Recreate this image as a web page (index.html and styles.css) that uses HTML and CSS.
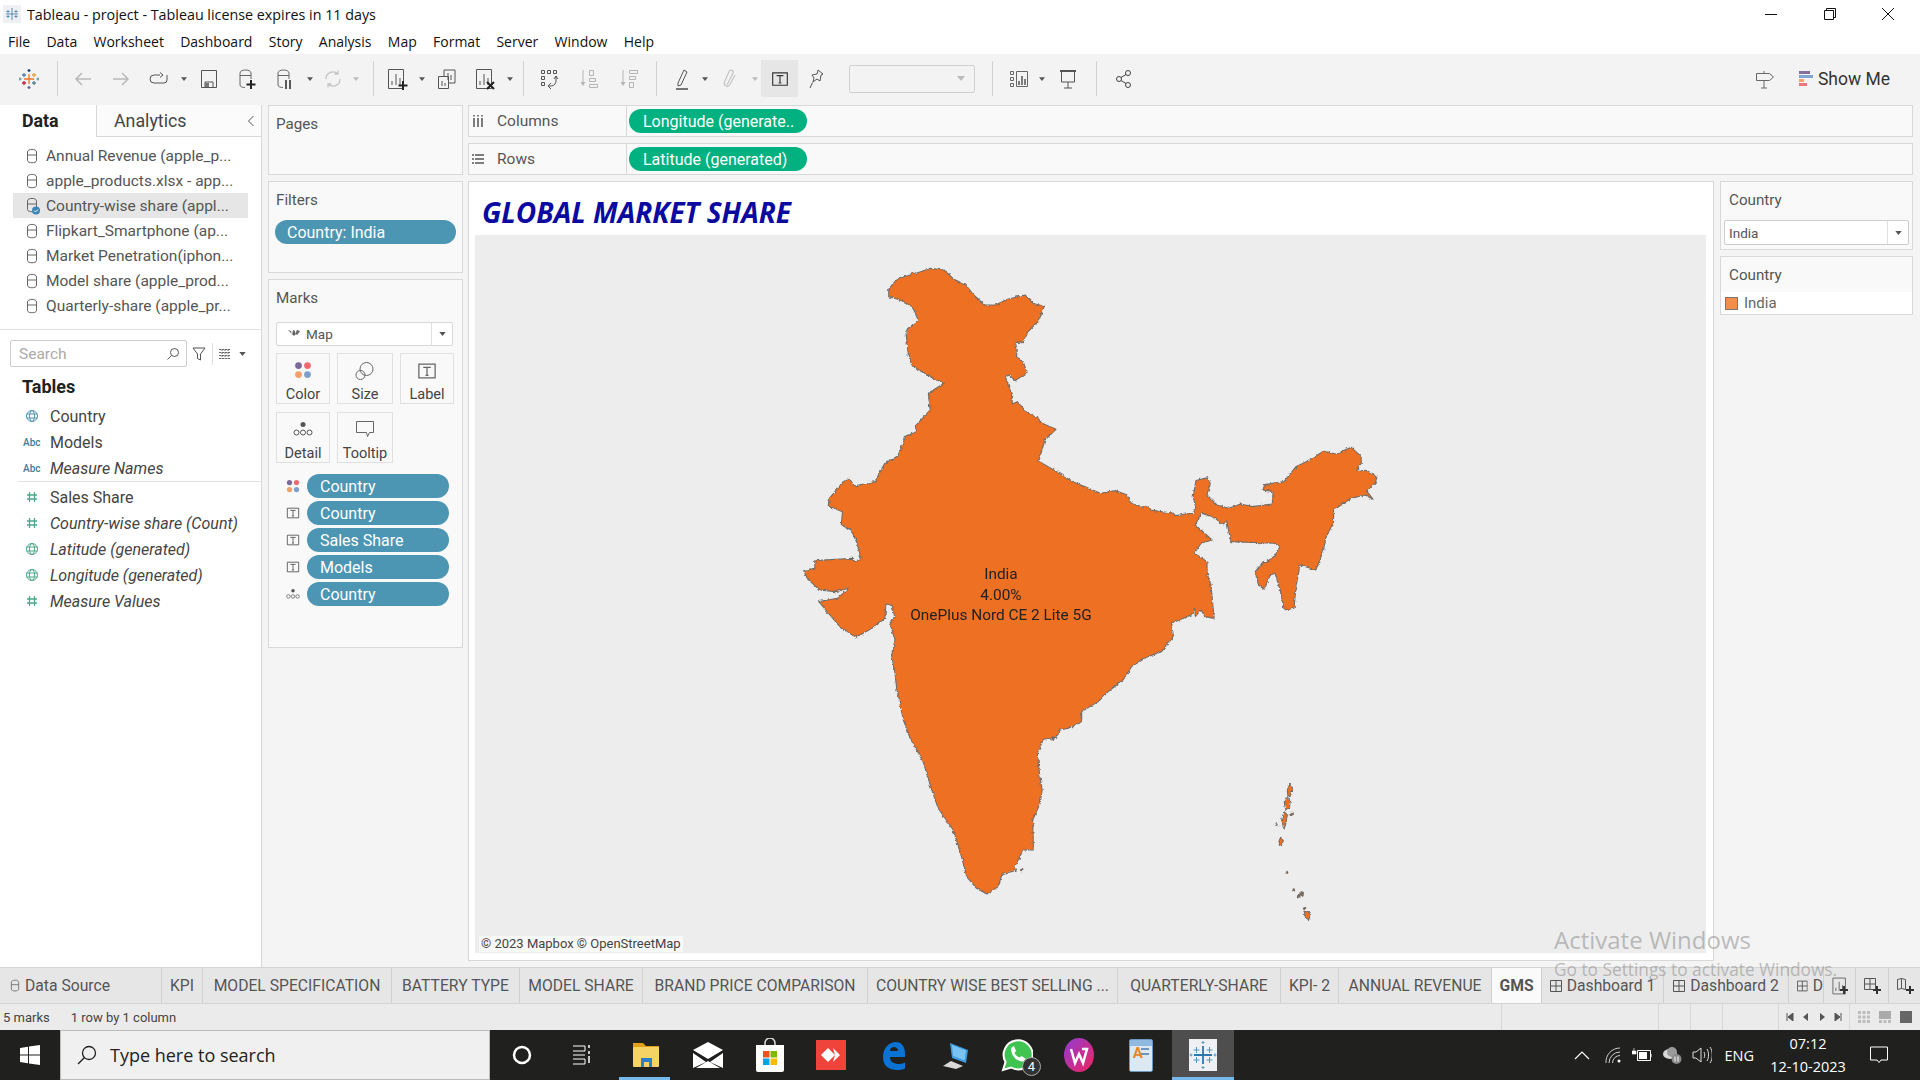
FILE: index.html
```html
<!DOCTYPE html>
<html lang="en">
<head>
    <meta charset="UTF-8">
    <title>Tableau - project</title>
    <link rel="stylesheet" href="styles.css">
</head>
<body>
    <!-- shared icons -->
    <svg class="defs" width="0" height="0">
        <symbol id="db" viewBox="0 0 12 16"><path d="M1.5 4v8.5c0 3 9 3 9 0V4c0-3.500-9-3.500-9 0zM1.500 7h9" fill="none" stroke="currentColor"/></symbol>
        <symbol id="db-on" viewBox="0 0 14 18"><path d="M1.500 4v8.500c0 3 9 3 9 0V4c0-3.500-9-3.500-9 0zM1.500 7h9" fill="none" stroke="currentColor"/><circle cx="10" cy="13.500" r="4" fill="#3a86b5"/><path d="M8 13.500l1.500 1.500 2.500-2.500" fill="none" stroke="#fff"/></symbol>
        <symbol id="globe" viewBox="0 0 14 14"><g fill="none" stroke="currentColor"><circle cx="7" cy="7" r="5.500"/><ellipse cx="7" cy="7" rx="2.500" ry="5.500"/><path d="M1.500 5h11M1.500 9h11"/></g></symbol>
        <symbol id="hash" viewBox="0 0 14 14"><path d="M4.500 2v10M9.500 2v10M2 5h10M2 9h10" fill="none" stroke="currentColor" stroke-width="1.300"/></symbol>
        <symbol id="tbox" viewBox="0 0 16 16"><path d="M1.500 2.500h13v11h-13zM5 5h6M8 5v6.500M6.800 11.500h2.400" fill="none" stroke="currentColor"/></symbol>
        <symbol id="dots4" viewBox="0 0 16 16"><circle cx="4" cy="4" r="3" fill="#7b6a97"/><circle cx="12" cy="4" r="3" fill="#ee6a72"/><circle cx="4" cy="12" r="3" fill="#f2a06a"/><circle cx="12" cy="12" r="3" fill="#7f9fcb"/></symbol>
        <symbol id="detail" viewBox="0 0 20 16"><circle cx="10" cy="3.500" r="2.500" fill="#555"/><g fill="none" stroke="#555"><circle cx="3.500" cy="11.500" r="2.500"/><circle cx="10" cy="11.500" r="2.500"/><circle cx="16.500" cy="11.500" r="2.500"/></g></symbol>
        <symbol id="table" viewBox="0 0 12 12"><path d="M.5.5h11v11H.5zM6 .5v11M.5 6h11" fill="none" stroke="currentColor"/></symbol>
        <symbol id="bars" viewBox="0 0 24 24"><path d="M3.500 2.500h15v19h-15zM7 18v-4M11 18V7M15 18v-7" fill="none" stroke="#555"/></symbol>
        <symbol id="caret" viewBox="0 0 8 5"><path d="M0 0h8L4 5z" fill="currentColor"/></symbol>
    </svg>

    <div class="titlebar">
        <svg class="app-icon" width="18" height="18" viewBox="0 0 18 18"><rect width="18" height="18" fill="#eef0f3"/><path d="M9 3v12M3 9h12M5 5v3M3.500 6.500h3M13 5v3M11.500 6.500h3M5 10v3M3.500 11.500h3M13 10v3M11.500 11.500h3" stroke="#5b8fb3" fill="none"/></svg>
        <span class="app-title">Tableau - project - Tableau license expires in 11 days</span>
        <div class="win-btns">
            <svg width="14" height="14" viewBox="0 0 14 14"><path d="M1 7.500h12" stroke="#111" fill="none"/></svg>
            <svg width="14" height="14" viewBox="0 0 14 14"><path d="M1.500 3.500h9v9h-9zM3.500 3.500v-2h9v9h-2" stroke="#111" fill="none"/></svg>
            <svg width="14" height="14" viewBox="0 0 14 14"><path d="M1 1l12 12M13 1L1 13" stroke="#111" fill="none"/></svg>
        </div>
    </div>

    <div class="menubar">
        <span>File</span><span>Data</span><span>Worksheet</span><span>Dashboard</span><span>Story</span><span>Analysis</span><span>Map</span><span>Format</span><span>Server</span><span>Window</span><span>Help</span>
    </div>

    <div class="toolbar">
        <div class="tg tg-logo">
            <div class="tool">
                <svg width="20" height="22" viewBox="0 0 20 22" fill="none" stroke-width="1.300"><path d="M10 6v10M5 11h10" stroke="#e8762b"/><path d="M5 5v4M3 7h4" stroke="#5b7fa8"/><path d="M15 5v4M13 7h4" stroke="#e8a03a"/><path d="M5 13v4M3 15h4" stroke="#c72037"/><path d="M15 13v4M13 15h4" stroke="#59879b"/><path d="M10 1v3M8.500 2.500h3" stroke="#1f447a"/><path d="M10 18v3M8.500 19.500h3" stroke="#5b6591"/><path d="M1 9.500v3M-.5 11h3M19 9.500v3M17.500 11h3" stroke="#7099a6"/></svg>
            </div>
        </div>
        <div class="sep"></div>
        <div class="tg tg-file">
            <div class="tool"><svg width="22" height="22" viewBox="0 0 22 22"><path d="M19 11H4M10 5l-6 6 6 6" fill="none" stroke="#b9b9b9" stroke-width="1.500"/></svg></div>
            <div class="tool"><svg width="22" height="22" viewBox="0 0 22 22"><path d="M3 11h15M12 5l6 6-6 6" fill="none" stroke="#b9b9b9" stroke-width="1.500"/></svg></div>
            <div class="tool"><svg width="22" height="22" viewBox="0 0 22 22"><path d="M12 7H6a3.500 3.500 0 0 0 0 8h10a3 3 0 0 0 3-3V7M12 4.500L15 7l-3 2.500" fill="none" stroke="#555"/></svg></div>
            <svg class="caret" width="6" height="4"><use href="#caret"/></svg>
            <div class="tool"><svg width="20" height="22" viewBox="0 0 20 22"><path d="M2.500 2.500h15v17h-15zM6 19.500V14h8v5.500M6 19.500" fill="none" stroke="#555"/><rect x="6" y="15" width="4" height="4" fill="#777"/></svg></div>
            <div class="tool"><svg width="22" height="24" viewBox="0 0 22 24"><path d="M4 6v12c0 2 3 2.500 5 2.500M15 12V6c0-4-11-4-11 0M4 8.500h11" fill="none" stroke="#666"/><path d="M15 13v9M10.500 17.500h9" stroke="#222" stroke-width="2"/></svg></div>
            <div class="tool"><svg width="22" height="24" viewBox="0 0 22 24"><path d="M4 6v12c0 2 3 2.500 5 2.500M15 12V6c0-4-11-4-11 0M4 8.500h11" fill="none" stroke="#666"/><path d="M12 13v9M16 13v9" stroke="#333" stroke-width="1.600"/></svg></div>
            <svg class="caret" width="6" height="4"><use href="#caret"/></svg>
            <div class="tool tool-sm"><svg width="20" height="22" viewBox="0 0 20 22"><path d="M3 11a7 7 0 0 1 12-5M17 11a7 7 0 0 1-12 5M15 2.500V6h-3.500M5 19.500V16h3.500" fill="none" stroke="#c4c4c4" stroke-width="1.300"/></svg></div>
            <svg class="caret caret-off" width="6" height="4"><use href="#caret"/></svg>
        </div>
        <div class="sep"></div>
        <div class="tg tg-sheet">
            <div class="tool"><svg width="24" height="24"><use href="#bars"/><path d="M18 14v9M13.500 18.500h9" stroke="#222" stroke-width="2"/></svg></div>
            <svg class="caret" width="6" height="4"><use href="#caret"/></svg>
            <div class="tool"><svg width="22" height="24" viewBox="0 0 22 24"><path d="M8 9V3h11v13h-7M2.500 9.500h10v12h-10zM12 13V6M15 13V8M6 19v-5M9 19v-3" fill="none" stroke="#555"/></svg></div>
            <div class="tool"><svg width="24" height="24"><use href="#bars"/><path d="M14 15l7 7M21 15l-7 7" stroke="#222" stroke-width="2"/></svg></div>
            <svg class="caret" width="6" height="4"><use href="#caret"/></svg>
        </div>
        <div class="sep"></div>
        <div class="tg tg-sort">
            <div class="tool"><svg width="22" height="24" viewBox="0 0 22 24"><path d="M3.500 3.500h3v3h-3zM9.500 3.500h3v3h-3zM15.500 3.500h3v3h-3zM3.500 9.500h3v3h-3zM3.500 15.500h3v3h-3zM18 9v5a5 5 0 0 1-5 5h-2M13 16l-3 3 3 3M16 12l2-3 2 3" fill="none" stroke="#555"/></svg></div>
            <div class="tool"><svg width="20" height="22" viewBox="0 0 20 22"><path d="M3 2v13M9.500 2.500h4v5h-4zM9.500 10.500h6v3h-6zM9.500 16.500h8v3h-8z" fill="none" stroke="#b5b5b5"/><path d="M.5 14h5L3 18z" fill="#b5b5b5"/></svg></div>
            <div class="tool"><svg width="20" height="22" viewBox="0 0 20 22"><path d="M3 2v13M9.500 2.500h8v3h-8zM9.500 8.500h6v3h-6zM9.500 14.500h4v5h-4z" fill="none" stroke="#b5b5b5"/><path d="M.5 14h5L3 18z" fill="#b5b5b5"/></svg></div>
        </div>
        <div class="sep"></div>
        <div class="tg tg-format">
            <div class="tool tool-sm"><svg width="18" height="24" viewBox="0 0 18 24"><path d="M5 16l6-13 3 2-6 13-3 1z" fill="none" stroke="#555"/><path d="M3 22h12" stroke="#555" stroke-width="1.600"/></svg></div>
            <svg class="caret" width="6" height="4"><use href="#caret"/></svg>
            <div class="tool"><svg width="16" height="22" viewBox="0 0 16 22"><path d="M5 17L11 5c1-2.500-2.500-4-4-1.500L2.500 14c-1.500 3.500 3.500 6 5.500 2.500L13 7" fill="none" stroke="#c4c4c4" stroke-width="1.200"/></svg></div>
            <svg class="caret caret-off" width="6" height="4"><use href="#caret"/></svg>
            <div class="tool tool-on"><svg class="t-ic" width="18" height="18"><use href="#tbox"/></svg></div>
            <div class="tool tool-sm tool-pin"><svg width="18" height="22" viewBox="0 0 18 22"><path d="M10 2l5 4-2 1-1 6-3-2-4 3 1-4-2-3 5-1zM4.500 14.500L2 20" fill="none" stroke="#555"/></svg></div>
            <div class="combo"><svg class="caret caret-off" width="8" height="5"><use href="#caret"/></svg></div>
        </div>
        <div class="sep"></div>
        <div class="tg tg-view">
            <div class="tool tool-sm"><svg width="20" height="20" viewBox="0 0 20 20"><path d="M1.500 2.500h3v3h-3zM1.500 8.500h3v3h-3zM1.500 14.500h3v3h-3zM7.500 2.500h11v15h-11z" fill="none" stroke="#666"/><path d="M10 16v-4M13 16V7M16 16v-6" stroke="#555" stroke-width="1.500"/></svg></div>
            <svg class="caret" width="6" height="4"><use href="#caret"/></svg>
            <div class="tool"><svg width="20" height="22" viewBox="0 0 20 22"><path d="M2 3h16" stroke="#555" stroke-width="2"/><path d="M3.500 3v11h13V3M10 14v6M6 20h8" fill="none" stroke="#555"/></svg></div>
        </div>
        <div class="sep"></div>
        <div class="tg tg-share">
            <div class="tool tool-sm"><svg width="18" height="20" viewBox="0 0 18 20"><g fill="none" stroke="#444"><circle cx="13" cy="4" r="2.500"/><circle cx="4" cy="10" r="2.500"/><circle cx="13" cy="16" r="2.500"/><path d="M6 8.500l5-3M6 11.500l5 3"/></g></svg></div>
        </div>
        <div class="tool-right">
            <svg width="20" height="20" viewBox="0 0 20 20"><path d="M1.500 4.500h13l4 3.500-4 3.500h-13zM9 2v2.500M9 11.500V19M6 19h6" fill="none" stroke="#666"/></svg>
            <button class="show-me">
                <span class="sm-icon"><i class="b1"></i><i class="b2"></i><i class="b3"></i><i class="b4"></i></span>
                Show Me
            </button>
        </div>
    </div>

    <div class="workspace">
        <!-- Data pane -->
        <aside class="data-panel">
            <div class="panel-tabs">
                <div class="panel-tab active">Data</div>
                <div class="panel-tab">Analytics<svg class="collapse" width="8" height="12" viewBox="0 0 8 12"><path d="M6.500 1L1.500 6l5 5" fill="none" stroke="#555"/></svg></div>
            </div>
            <ul class="sources">
                <li><svg class="db" width="12" height="16"><use href="#db"/></svg>Annual Revenue (apple_p...</li>
                <li><svg class="db" width="12" height="16"><use href="#db"/></svg>apple_products.xlsx - app...</li>
                <li class="selected"><svg class="db db-sel" width="14" height="18"><use href="#db-on"/></svg>Country-wise share (appl...</li>
                <li><svg class="db" width="12" height="16"><use href="#db"/></svg>Flipkart_Smartphone (ap...</li>
                <li><svg class="db" width="12" height="16"><use href="#db"/></svg>Market Penetration(iphon...</li>
                <li><svg class="db" width="12" height="16"><use href="#db"/></svg>Model share (apple_prod...</li>
                <li><svg class="db" width="12" height="16"><use href="#db"/></svg>Quarterly-share (apple_pr...</li>
            </ul>
            <div class="search-row">
                <div class="search-box">
                    <span>Search</span>
                    <svg width="14" height="14" viewBox="0 0 14 14"><circle cx="8.500" cy="5.500" r="4" fill="none" stroke="#555"/><path d="M5.500 8.500L1.500 12.500" stroke="#555"/></svg>
                </div>
                <svg class="filter-ic" width="14" height="14" viewBox="0 0 14 14"><path d="M1 1h12L8.500 7v6l-3-1.500V7z" fill="none" stroke="#555"/></svg>
                <span class="row-sep"></span>
                <svg width="12" height="10" viewBox="0 0 12 10"><path d="M0 .5h12M0 3.500h12M0 6.500h12M0 9.500h12M3 0v10M6 0v10M9 0v10" stroke="#666" stroke-dasharray="2 1" fill="none"/></svg>
                <svg class="caret row-caret" width="7" height="4"><use href="#caret"/></svg>
            </div>
            <h3 class="tables-head">Tables</h3>
            <ul class="fields">
                <li><svg class="f-ic blue" width="14" height="14"><use href="#globe"/></svg>Country</li>
                <li><span class="abc">Abc</span>Models</li>
                <li class="calc"><span class="abc">Abc</span>Measure Names</li>
                <li class="divider"></li>
                <li><svg class="f-ic green" width="14" height="14"><use href="#hash"/></svg>Sales Share</li>
                <li class="calc"><svg class="f-ic green" width="14" height="14"><use href="#hash"/></svg>Country-wise share (Count)</li>
                <li class="calc"><svg class="f-ic green" width="14" height="14"><use href="#globe"/></svg>Latitude (generated)</li>
                <li class="calc"><svg class="f-ic green" width="14" height="14"><use href="#globe"/></svg>Longitude (generated)</li>
                <li class="calc"><svg class="f-ic green" width="14" height="14"><use href="#hash"/></svg>Measure Values</li>
            </ul>
        </aside>

        <!-- Pages / Filters / Marks -->
        <section class="cards">
            <div class="card card-pages"><div class="card-title">Pages</div></div>
            <div class="card card-filters">
                <div class="card-title">Filters</div>
                <div class="pill pill-filter">Country: India</div>
            </div>
            <div class="card card-marks">
                <div class="card-title">Marks</div>
                <div class="mark-type">
                    <span class="mark-name">
                        <svg width="14" height="12" viewBox="0 0 14 12"><path d="M1 2l3 1 1 4 1-5 2 1v3l2-4 3 1-2 3-1 1-1-1-2 2 -2-2z" fill="#666"/></svg>
                        Map
                    </span>
                    <span class="mark-drop"><svg class="caret" width="7" height="4"><use href="#caret"/></svg></span>
                </div>
                <div class="mark-btns">
                    <div class="mark-btn"><svg width="18" height="18"><use href="#dots4"/></svg>Color</div>
                    <div class="mark-btn"><svg width="20" height="20" viewBox="0 0 20 20"><g fill="none" stroke="#666"><circle cx="11.500" cy="8" r="6.500"/><circle cx="5.500" cy="14" r="4.500"/></g></svg>Size</div>
                    <div class="mark-btn"><svg class="lbl-ic" width="20" height="20"><use href="#tbox"/></svg>Label</div>
                    <div class="mark-btn"><svg width="20" height="18"><use href="#detail"/></svg>Detail</div>
                    <div class="mark-btn"><svg width="20" height="18" viewBox="0 0 20 18"><path d="M1.500 1.500h17v11h-4l-2 4-1-4h-10z" fill="none" stroke="#666"/></svg>Tooltip</div>
                </div>
                <div class="encodings">
                    <div class="enc"><svg width="14" height="14"><use href="#dots4"/></svg><div class="pill">Country</div></div>
                    <div class="enc"><svg class="t-small" width="14" height="14"><use href="#tbox"/></svg><div class="pill">Country</div></div>
                    <div class="enc"><svg class="t-small" width="14" height="14"><use href="#tbox"/></svg><div class="pill">Sales Share</div></div>
                    <div class="enc"><svg class="t-small" width="14" height="14"><use href="#tbox"/></svg><div class="pill">Models</div></div>
                    <div class="enc"><svg width="14" height="12"><use href="#detail"/></svg><div class="pill">Country</div></div>
                </div>
            </div>
        </section>

        <main class="main">
            <div class="shelf">
                <div class="shelf-label"><svg width="12" height="12" viewBox="0 0 12 12"><path d="M2 3v9M6 3v9M10 3v9M2 0v1.500M6 0v1.500M10 0v1.500" stroke="#555" stroke-width="1.500"/></svg>Columns</div>
                <div class="pill pill-green">Longitude (generate..</div>
            </div>
            <div class="shelf">
                <div class="shelf-label"><svg width="12" height="12" viewBox="0 0 12 12"><path d="M0 2h2M3 2h9M0 6h2M3 6h9M0 10h2M3 10h9" stroke="#555" stroke-width="1.500"/></svg>Rows</div>
                <div class="pill pill-green">Latitude (generated)</div>
            </div>
            <div class="view-row">
                <div class="viz">
                    <h1 class="viz-title">GLOBAL MARKET SHARE</h1>
                    <div class="map">
                        <svg class="map-svg" width="1232" height="718" viewBox="0 0 1232 718">
                            <defs>
                                <filter id="rough" x="-2%" y="-2%" width="104%" height="104%">
                                    <feTurbulence type="fractalNoise" baseFrequency=".3" numOctaves="2" seed="3" result="n"/>
                                    <feDisplacementMap in="SourceGraphic" in2="n" scale="3.500" xChannelSelector="R" yChannelSelector="G"/>
                                </filter>
                            </defs>
                            <g filter="url(#rough)">
                                <path class="land" transform="translate(305 15) scale(.3954 .3333)" d="M275 118L285 102 300 85 330 75 335 65 345 70 380 55 415 60 440 88 470 105 490 135 518 165 545 165 575 148 620 135 640 160 668 170 655 210 628 245 615 275 595 278 600 300 598 320 615 335 625 368 595 392 580 375 570 380 585 430 588 462 600 455 625 488 655 505 660 518 698 538 670 570 660 610 652 632 700 665 740 695 775 712 810 730 850 722 878 735 885 755 910 772 930 768 935 780 995 790 1000 797 1045 790 1052 775 1045 740 1052 692 1082 683 1088 700 1080 735 1105 765 1135 775 1165 762 1195 770 1245 762 1247 725 1222 720 1225 704 1275 695 1305 650 1340 630 1375 603 1405 612 1445 592 1470 620 1470 640 1458 660 1485 662 1510 680 1505 700 1485 725 1500 748 1480 735 1445 745 1400 780 1400 815 1380 865 1375 900 1355 960 1315 945 1305 1010 1300 1075 1275 1080 1265 1020 1252 970 1240 975 1225 1018 1210 1005 1202 965 1215 945 1245 925 1265 890 1250 880 1140 875 1130 815 1120 822 1095 800 1065 790 1050 825 1093 870 1065 880 1048 910 1080 935 1080 970 1090 1005 1098 1105 1075 1100 1065 1080 1050 1100 1050 1075 1040 1095 990 1120 995 1160 965 1205 927 1222 889 1250 868 1290 830 1325 805 1355 763 1385 763 1415 729 1435 708 1440 700 1462 666 1468 651 1510 656 1570 663 1620 658 1660 639 1710 641 1800 615 1800 594 1850 598 1860 561 1875 552 1910 523 1932 497 1915 472 1880 459 1820 438 1740 400 1675 381 1610 362 1535 329 1465 312 1410 295 1315 291 1270 282 1215 291 1170 278 1120 290 1100 283 1065 268 1062 265 1105 240 1130 193 1162 155 1135 98 1055 145 1045 175 1015 140 1025 100 1020 68 985 60 962 88 955 88 932 185 925 190 935 205 925 195 880 180 840 155 825 158 785 122 768 125 745 160 695 175 685 188 708 240 695 265 640 298 618 318 558 345 545 345 525 380 480 375 430 415 400 380 380 335 348 325 320 318 240 350 212 335 170 305 150 275 140Z"/>
                                <g class="land" transform="translate(385 385) scale(.3333)">
                                    <path d="M1290 492L1298 505 1292 525 1284 528 1282 510ZM1280 530L1292 540 1288 565 1278 572 1273 545ZM1272 575L1282 585 1278 610 1272 628 1265 600ZM1262 652L1270 662 1265 677 1255 670ZM1332 875L1345 875 1352 885 1345 902 1336 890Z"/>
                                </g>
                                <g class="islet" transform="translate(385 385) scale(.3333)">
                                    <circle cx="1295" cy="582" r="7"/><circle cx="1249" cy="614" r="4"/><circle cx="1280" cy="757" r="5"/><circle cx="1301" cy="810" r="5"/><circle cx="1316" cy="830" r="6"/><circle cx="1325" cy="821" r="7"/><circle cx="1334" cy="866" r="5"/><circle cx="484" cy="750" r="4"/><circle cx="580" cy="357" r="5"/>
                                </g>
                            </g>
                        </svg>
                        <div class="map-label">India<br>4.00%<br>OnePlus Nord CE 2 Lite 5G</div>
                        <div class="attribution">© 2023 Mapbox © OpenStreetMap</div>
                    </div>
                </div>
                <div class="legends">
                    <div class="legend">
                        <div class="legend-title">Country</div>
                        <div class="legend-body">
                            <div class="legend-select">India<span class="mark-drop"><svg class="caret" width="7" height="4"><use href="#caret"/></svg></span></div>
                        </div>
                    </div>
                    <div class="legend">
                        <div class="legend-title">Country</div>
                        <div class="legend-item"><span class="swatch"></span>India</div>
                    </div>
                </div>
            </div>
        </main>
    </div>

    <div class="tabs">
        <div class="tab tab-ds"><svg class="db" width="10" height="13"><use href="#db"/></svg>Data Source</div>
        <div class="tab">KPI</div>
        <div class="tab">MODEL SPECIFICATION</div>
        <div class="tab">BATTERY TYPE</div>
        <div class="tab">MODEL SHARE</div>
        <div class="tab">BRAND PRICE COMPARISON</div>
        <div class="tab">COUNTRY WISE BEST SELLING ...</div>
        <div class="tab">QUARTERLY-SHARE</div>
        <div class="tab">KPI- 2</div>
        <div class="tab">ANNUAL REVENUE</div>
        <div class="tab tab-on">GMS</div>
        <div class="tab tab-dash"><svg width="12" height="12"><use href="#table"/></svg>Dashboard 1</div>
        <div class="tab tab-dash"><svg width="12" height="12"><use href="#table"/></svg>Dashboard 2</div>
        <div class="tab tab-dash tab-cut"><svg width="12" height="12"><use href="#table"/></svg>D</div>
        <div class="tab tab-ic"><svg width="20" height="20"><use href="#bars"/><path d="M14 10v8M10 14h8" stroke="#333" stroke-width="2"/></svg></div>
        <div class="tab tab-ic"><svg width="20" height="20" viewBox="0 0 20 20"><path d="M2.500 2.500h11v11h-11zM8 2.500v11M2.500 8h11" fill="none" stroke="#555"/><path d="M15 10v8M11 14h8" stroke="#333" stroke-width="2"/></svg></div>
        <div class="tab tab-ic"><svg width="20" height="20" viewBox="0 0 20 20"><path d="M2.500 3.500l4-1 4 1v10l-4-1-4 1zM6.500 2.500v10" fill="none" stroke="#555"/><path d="M15 10v8M11 14h8" stroke="#333" stroke-width="2"/></svg></div>
    </div>

    <div class="status">
        <div class="st-cell st-info"><span>5 marks</span><span>1 row by 1 column</span></div>
        <div class="st-cell"></div><div class="st-cell"></div><div class="st-cell"></div><div class="st-cell"></div>
        <div class="st-cell st-nav">
            <svg width="8" height="8" viewBox="0 0 8 8"><path d="M1 0v8M7 0v8L2 4z" stroke="#555" fill="#555"/></svg>
            <svg width="8" height="8" viewBox="0 0 8 8"><path d="M6 0v8L1 4z" fill="#555"/></svg>
            <svg width="8" height="8" viewBox="0 0 8 8"><path d="M2 0v8l5-4z" fill="#555"/></svg>
            <svg width="8" height="8" viewBox="0 0 8 8"><path d="M7 0v8M1 0v8l5-4z" stroke="#555" fill="#555"/></svg>
        </div>
        <div class="st-cell st-view">
            <svg width="12" height="12" viewBox="0 0 12 12"><path d="M0 1.500h12M0 6h12M0 10.500h12" stroke="#bbb" stroke-width="3" stroke-dasharray="3 1.500"/></svg>
            <svg width="12" height="12" viewBox="0 0 12 12"><rect width="12" height="8" fill="#aaa"/><path d="M0 10.500h12" stroke="#bbb" stroke-width="3" stroke-dasharray="3 1.500"/></svg>
            <svg width="12" height="12"><rect width="12" height="12" fill="#666"/></svg>
        </div>
    </div>

    <div class="watermark">
        <div class="wm-big">Activate Windows</div>
        <div class="wm-small">Go to Settings to activate Windows.</div>
    </div>

    <footer class="taskbar">
        <div class="start">
            <svg width="20" height="20" viewBox="0 0 20 20"><path d="M0 3l8-1.200V9.500H0zM9 1.600L20 0v9.500H9zM0 10.500h8v7.700L0 17zM9 10.500h11V20L9 18.400z" fill="#fff"/></svg>
        </div>
        <div class="task-search">
            <svg width="22" height="22" viewBox="0 0 22 22"><circle cx="13" cy="9" r="6.500" fill="none" stroke="#222" stroke-width="1.300"/><path d="M8.500 13.500L2 20" stroke="#222" stroke-width="1.500"/></svg>
            <span>Type here to search</span>
        </div>
        <div class="task-icons">
            <div class="task-ic"><svg width="22" height="22" viewBox="0 0 22 22"><circle cx="11" cy="11" r="8" fill="none" stroke="#fff" stroke-width="2.500"/></svg></div>
            <div class="task-ic task-view"><svg width="22" height="22" viewBox="0 0 22 22"><path d="M3 2h12v5H3M3 20h12v-5H3M3 11h12" fill="none" stroke="#fff"/><path d="M19 7v3M19 12v7M19 1v3" stroke="#fff" stroke-width="1.500"/></svg></div>
            <div class="task-ic task-open"><svg width="30" height="28" viewBox="0 0 30 28"><path d="M2 2h10l3 3h13v3H2z" fill="#e0a01c"/><rect x="2" y="6" width="26" height="20" rx="1" fill="#f6d365"/><path d="M10 26v-9h11v9h-3v-5h-5v5z" fill="#2a7fd0"/></svg></div>
            <div class="task-ic"><svg width="32" height="26" viewBox="0 0 32 26"><path d="M1 8L16 0l15 8v18H1z" fill="#fff"/><path d="M1 8l15 9 15-9v3L18 20l13 6H28L16 19 4 26H1l13-6L1 11z" fill="#1f1f1f"/></svg></div>
            <div class="task-ic"><svg width="30" height="34" viewBox="0 0 30 34"><path d="M10 8V5a5 5 0 0 1 10 0v3" fill="none" stroke="#ddd" stroke-width="1.500"/><path d="M1 7h28v25a2 2 0 0 1-2 2H3a2 2 0 0 1-2-2z" fill="#fff"/><rect x="8" y="13" width="6.500" height="6.500" fill="#f25022"/><rect x="15.500" y="13" width="6.500" height="6.500" fill="#7fba00"/><rect x="8" y="20.500" width="6.500" height="6.500" fill="#00a4ef"/><rect x="15.500" y="20.500" width="6.500" height="6.500" fill="#ffb900"/></svg></div>
            <div class="task-ic"><svg width="30" height="30" viewBox="0 0 30 30"><rect width="30" height="30" fill="#ef443b"/><path d="M5 15l7-7 7 7-7 7z" fill="#fff"/><path d="M17 8l7 7-7 7 2-7z" fill="#fff"/></svg></div>
            <div class="task-ic"><svg width="28" height="32" viewBox="0 0 28 32"><path d="M4 18C4 8 11 3 17 3c6 0 9 5 9 12v3H11c0 5 4 7 9 7 2 0 4-.5 6-1.500v6c-2 1-5 1.500-8 1.500C9 31 4 26 4 18zm7-6h8c0-3-2-4-4-4s-4 1-4 4z" fill="#0a73d3"/></svg></div>
            <div class="task-ic"><svg width="28" height="30" viewBox="0 0 28 30"><path d="M9 3l18 7-2 13-14-5z" fill="#3d9ae0"/><path d="M11 5l14 5.500-1.500 10L12 16z" fill="#79c3f2"/><path d="M2 26l8-5 12 5-7 3z" fill="#d9d9d9"/></svg></div>
            <div class="task-ic task-wa">
                <svg width="32" height="34" viewBox="0 0 32 34"><path d="M2 32l2.500-8A14.500 14.500 0 1 1 10 29.500z" fill="#3fc351" stroke="#fff" stroke-width="2"/><path d="M10 10l3-2 2 5-1.500 2c1 2 2.500 3.500 5 4.500l2-1.500 4 2.500-2 3c-6 1-13-6-12.500-13.500z" fill="#fff"/></svg>
                <span class="wa-badge">4</span>
            </div>
            <div class="task-ic"><svg width="30" height="34" viewBox="0 0 30 34"><defs><linearGradient id="wps" x1="0" y1="0" x2="1" y2="1"><stop offset="0" stop-color="#8f3cd6"/><stop offset="1" stop-color="#f0245e"/></linearGradient></defs><ellipse cx="15" cy="17" rx="15" ry="17" fill="url(#wps)"/><path d="M7 11l4 14 4-9 4 9 4-14h-5" fill="none" stroke="#fff" stroke-width="2.500"/></svg></div>
            <div class="task-ic"><div class="fontbook"><span>A</span><i></i></div></div>
            <div class="task-ic task-active"><svg width="28" height="32" viewBox="0 0 28 32"><rect width="28" height="32" fill="#eef0f3"/><path d="M14 7v18M5 16h18" stroke="#2f77a8" stroke-width="1.800" fill="none"/><path d="M7.500 8v6M4.500 11h6M20.500 8v6M17.500 11h6M7.500 18v6M4.500 21h6M20.500 18v6M17.500 21h6M14 2v3M12.500 3.500h3M14 27v3M12.500 28.500h3M2 14.500v3M.5 16h3M26 14.500v3M24.500 16h3" stroke="#5b96bd" fill="none"/></svg></div>
        </div>
        <div class="tray">
            <svg width="16" height="10" viewBox="0 0 16 10"><path d="M1 9l7-7 7 7" fill="none" stroke="#fff" stroke-width="1.200"/></svg>
            <svg class="tray-wifi" width="16" height="18" viewBox="0 0 16 18"><g fill="none" stroke="#ccc"><path d="M1 17A14 14 0 0 1 15 2M4 17A11 11 0 0 1 15 6M7.500 17a7.500 7.500 0 0 1 7.500-7.500"/></g><circle cx="14" cy="15" r="1.500" fill="#fff"/></svg>
            <svg width="20" height="14" viewBox="0 0 20 14"><path d="M5.500 2.500h13v10h-13z" fill="none" stroke="#fff"/><rect x="7" y="4" width="8" height="7" fill="#fff"/><path d="M19 6v3" stroke="#fff"/><path d="M0 3h4v3H0zM2 0v3" fill="#fff" stroke="#fff" stroke-width=".6"/></svg>
            <svg width="20" height="20" viewBox="0 0 20 20"><ellipse cx="8" cy="9" rx="7" ry="5" fill="#d8d8d8"/><circle cx="10" cy="7" r="5" fill="#9a9a9a"/><circle cx="14.500" cy="14" r="5" fill="#8a8a8a"/><path d="M13 11.500v5M16 11.500v5" stroke="#fff"/></svg>
            <svg width="20" height="18" viewBox="0 0 20 18"><path d="M1 6h3l5-4v14l-5-4H1zM12 6c1 2 1 4 0 6M15 3c2 3 2 9 0 12M18 1c3 4 3 12 0 16" fill="none" stroke="#ddd"/></svg>
            <span class="lang">ENG</span>
            <div class="clock"><span>07:12</span><span>12-10-2023</span></div>
            <svg class="notif" width="18" height="18" viewBox="0 0 18 18"><path d="M.5 1h17v13H11l-2 2.500L7 14H.5z" fill="none" stroke="#fff"/></svg>
        </div>
    </footer>
</body>
</html>
```

FILE: styles.css
```css
* {
    box-sizing: border-box;
}
html, body {
    margin: 0;
    padding: 0;
}
body {
    width: 1920px;
    height: 1080px;
    overflow: hidden;
    position: relative;
    display: flex;
    flex-direction: column;
    font-family: "Roboto", "Liberation Sans", sans-serif;
    font-size: 14px;
    color: #333;
    background: #f4f4f4;
}
ul {
    list-style: none;
    margin: 0;
    padding: 0;
}
.defs {
    position: absolute;
}

/* window title + menu */
.titlebar {
    height: 27px;
    background: #fff;
    display: flex;
    align-items: center;
    padding: 1px 0 0 3px;
    font-family: "Open Sans", sans-serif;
    font-size: 14.300px;
    color: #111;
}
.app-title {
    margin-left: 6px;
}
.win-btns {
    margin-left: auto;
    display: flex;
    gap: 44.500px;
    padding-right: 25px;
}
.menubar {
    height: 27px;
    background: #fff;
    display: flex;
    align-items: center;
    gap: 16.300px;
    padding: 2px 0 0 8px;
    font-family: "Open Sans", sans-serif;
    font-size: 14px;
    color: #111;
}

/* toolbar */
.toolbar {
    height: 51px;
    background: #f3f3f3;
    display: flex;
    align-items: center;
    padding: 0 0 2px 10px;
}
.tg {
    display: flex;
    align-items: center;
    height: 100%;
}
.tg-logo { width: 47px; }
.tg-file { width: 315px; padding-left: 6px; }
.tg-sheet { width: 149px; padding-left: 4px; }
.tg-sort { width: 132px; padding-left: 6px; }
.tg-sort .tool:not(:first-child) { width: 40px; padding-left: 3px; }
.tg-format { width: 335px; padding-left: 8px; }
.tg-view { width: 103px; padding-left: 9px; }
.tg-view .tool:last-child { margin-left: 1px; }
.tg-share { padding-left: 10px; }
.sep {
    width: 1px;
    height: 35px;
    background: #d2d2d2;
}
.tool {
    width: 38px;
    height: 37px;
    display: flex;
    align-items: center;
    justify-content: center;
    flex: none;
}
.tool-sm {
    width: 34px;
}
.tool-on {
    width: 37px;
    background: #e6e6e6;
}
.tool-pin {
    margin-left: 2px;
}
.t-ic {
    color: #333;
}
.caret {
    color: #555;
    flex: none;
    margin: 0 3px;
}
.caret-off {
    color: #bbb;
}
.combo {
    width: 126px;
    height: 28px;
    margin-left: 15px;
    border: 1px solid #cfcfcf;
    border-radius: 2px;
    display: flex;
    align-items: center;
    justify-content: flex-end;
    padding-right: 6px;
}
.tool-right {
    margin-left: auto;
    display: flex;
    align-items: center;
    padding-right: 30px;
}
.show-me {
    border: none;
    background: none;
    display: flex;
    align-items: center;
    margin-left: 24px;
    gap: 5px;
    font-family: "Roboto", sans-serif;
    font-size: 17.500px;
    color: #333;
    padding: 0;
}
.sm-icon {
    display: flex;
    flex-direction: column;
    width: 14px;
}
.sm-icon i {
    display: block;
    height: 3.5px;
}
.sm-icon .b1 { width: 11px; background: #85709b; margin-bottom: .5px; }
.sm-icon .b2 { width: 14px; background: #7ea6d2; margin-bottom: .5px; }
.sm-icon .b3 { width: 5px; background: #f0a36e; margin-bottom: .5px; }
.sm-icon .b4 { width: 8px; background: #f0747e; }

/* main area */
.workspace {
    flex: 1;
    display: flex;
    min-height: 0;
}
.data-panel {
    width: 262px;
    background: #fff;
    border-right: 1px solid #d8d8d8;
    flex: none;
}
.panel-tabs {
    display: flex;
    height: 32px;
}
.panel-tab {
    font-size: 17.800px;
    line-height: 22px;
    color: #444;
    padding: 5px 0 0 17px;
    border-bottom: 1px solid #d8d8d8;
    flex: 1;
    position: relative;
    background: #fbfbfb;
}
.panel-tab.active {
    flex: none;
    width: 97px;
    padding-left: 22px;
    font-weight: 700;
    color: #222;
    background: #fff;
    border-bottom: none;
    border-right: 1px solid #d8d8d8;
}
.collapse {
    position: absolute;
    right: 6px;
    top: 10px;
}
.sources {
    padding-top: 6px;
    height: 193px;
    border-bottom: 1px solid #e2e2e2;
}
.sources li {
    height: 25px;
    margin-left: 13px;
    width: 235px;
    display: flex;
    align-items: center;
    padding-left: 13px;
    font-size: 15.500px;
    color: #555;
    white-space: nowrap;
}
.sources li.selected {
    background: #e6e6e6;
}
.db {
    color: #666;
    margin-right: 8px;
    flex: none;
}
.db-sel {
    margin-right: 6px;
}
.search-row {
    display: flex;
    align-items: center;
    height: 27px;
    margin: 10px 0 0 10px;
}
.search-box {
    width: 177px;
    height: 27px;
    border: 1px solid #ccc;
    border-radius: 2px;
    display: flex;
    align-items: center;
    justify-content: space-between;
    padding: 0 6px 0 8px;
    font-size: 15.500px;
    color: #aaa;
}
.filter-ic {
    margin-left: 5px;
}
.row-sep {
    width: 1px;
    height: 22px;
    background: #ddd;
    margin: 0 6px 0 6px;
}
.row-caret {
    margin-left: 8px;
}
.tables-head {
    margin: 10px 0 6px 22px;
    font-size: 18px;
    line-height: 20px;
    font-weight: 700;
    color: #222;
}
.fields li {
    height: 26px;
    display: flex;
    align-items: center;
    padding-left: 25px;
    font-size: 16px;
    color: #444;
    white-space: nowrap;
}
.fields li.calc {
    font-style: italic;
}
.fields li.divider {
    height: 1px;
    background: #e2e2e2;
    margin: 0 0 2px 18px;
    padding: 0;
}
.f-ic {
    flex: none;
    margin-right: 11px;
}
.blue { color: #4e96b4; }
.green { color: #4ea887; }
.abc {
    width: 25px;
    flex: none;
    margin-left: -2px;
    margin-right: 2px;
    font-style: normal;
    font-size: 10px;
    font-weight: 500;
    color: #3f7c99;
}

/* pages, filters, marks */
.cards {
    width: 206px;
    flex: none;
    padding: 0 5px 0 6px;
    display: flex;
    flex-direction: column;
    gap: 6px;
}
.card {
    background: #f9f9f9;
    border: 1px solid #d8d8d8;
    padding: 0 6px;
}
.card-pages { height: 70px; }
.card-filters { height: 92px; }
.card-marks { height: 369px; }
.card-title {
    font-size: 15.200px;
    color: #555;
    padding: 9px 1px 0 1px;
    line-height: 18px;
}
.pill {
    background: #4c96b3;
    color: #fff;
    border-radius: 12px;
    height: 24px;
    line-height: 25px;
    font-size: 16px;
    padding-left: 13px;
    white-space: nowrap;
}
.pill-filter {
    margin-top: 11px;
    padding-left: 12px;
}
.mark-type {
    margin: 15px 3px 0 1px;
    height: 24px;
    background: #fff;
    border: 1px solid #d8d8d8;
    border-radius: 2px;
    display: flex;
    align-items: center;
    font-size: 13.500px;
    color: #555;
}
.mark-name {
    flex: 1;
    display: flex;
    align-items: center;
    gap: 5px;
    padding-left: 10px;
}
.mark-drop {
    width: 21px;
    height: 100%;
    border-left: 1px solid #e0e0e0;
    display: flex;
    align-items: center;
    justify-content: center;
}
.mark-btns {
    display: grid;
    grid-template-columns: 54px 56px 54px;
    grid-auto-rows: 51px;
    gap: 8px 7px;
    margin: 7px 0 0 1px;
}
.mark-btn {
    border: 1px solid #e0e0e0;
    display: flex;
    flex-direction: column;
    align-items: center;
    justify-content: space-between;
    padding: 7px 0 0;
    font-size: 14.500px;
    color: #444;
}
.lbl-ic {
    color: #666;
}
.encodings {
    margin-top: 11px;
    display: flex;
    flex-direction: column;
    gap: 3px;
}
.enc {
    display: flex;
    align-items: center;
    padding-left: 11px;
    gap: 7px;
}
.enc .pill {
    width: 142px;
}
.t-small {
    color: #555;
}

.main {
    flex: 1;
    min-width: 0;
    padding-right: 7px;
    display: flex;
    flex-direction: column;
}
.shelf {
    height: 32px;
    margin-bottom: 6px;
    background: #f9f9f9;
    border: 1px solid #d8d8d8;
    display: flex;
    align-items: center;
}
.shelf-label {
    width: 158px;
    height: 100%;
    display: flex;
    align-items: center;
    gap: 13px;
    padding-left: 3px;
    font-size: 15.500px;
    color: #555;
    border-right: 1px solid #d8d8d8;
}
.pill-green {
    width: 178px;
    margin-left: 2px;
    padding-left: 14px;
    background: #02b180;
}
.view-row {
    display: flex;
    gap: 6px;
    align-items: flex-start;
}
.viz {
    width: 1246px;
    height: 780px;
    background: #fff;
    border: 1px solid #d8d8d8;
    padding: 0 7px 7px 6px;
    display: flex;
    flex-direction: column;
}
.viz-title {
    margin: 0;
    height: 53px;
    line-height: 60px;
    padding-left: 7px;
    font-family: "Open Sans", sans-serif;
    font-size: 28px;
    font-weight: 700;
    font-style: italic;
    color: #0a0aa0;
}
.map {
    flex: 1;
    position: relative;
    background: #ededed;
    overflow: hidden;
}
.map-svg {
    display: block;
}
.land {
    fill: #ee7020;
    stroke: #716c68;
    stroke-width: 1.100;
    stroke-linejoin: round;
    vector-effect: non-scaling-stroke;
}
.land path {
    vector-effect: non-scaling-stroke;
}
.islet {
    fill: #7a6c62;
}
.map-label {
    position: absolute;
    left: 426px;
    top: 329px;
    width: 200px;
    text-align: center;
    font-size: 15.400px;
    line-height: 20.500px;
    color: #222;
}
.attribution {
    position: absolute;
    left: 4px;
    bottom: 1px;
    padding: 0 2px;
    background: rgba(255, 255, 255, .6);
    font-size: 13px;
    line-height: 16px;
    color: #444;
}
.legends {
    flex: 1;
    display: flex;
    flex-direction: column;
    gap: 6px;
}
.legend {
    border: 1px solid #d8d8d8;
    background: #fff;
}
.legend-title {
    background: #f9f9f9;
    height: 35px;
    padding: 9px 0 0 8px;
    font-size: 15.200px;
    line-height: 18px;
    color: #555;
}
.legend-body {
    background: #f9f9f9;
    padding: 3px 3px 4px;
}
.legend-select {
    height: 25px;
    background: #fff;
    border: 1px solid #ccc;
    border-radius: 2px;
    display: flex;
    align-items: center;
    justify-content: space-between;
    padding-left: 4px;
    font-size: 13.500px;
    color: #555;
}
.legend-item {
    height: 22px;
    display: flex;
    align-items: center;
    font-size: 15px;
    color: #666;
    padding-left: 4px;
    gap: 6px;
}
.swatch {
    width: 13px;
    height: 13px;
    background: #f28e49;
    border: 1px solid #777;
}

/* sheet tabs */
.tabs {
    height: 37px;
    display: grid;
    grid-template-columns: 162px 41px 189px 128px 123px 225px 250px 163px 58px 153px 50px 122px 125px 35px 32px 33px 32px;
    background: #e6e6e6;
    border-top: 1px solid #d4d4d4;
    border-bottom: 1px solid #d4d4d4;
    font-size: 15.700px;
    color: #555;
}
.tab {
    display: flex;
    align-items: center;
    justify-content: center;
    gap: 5px;
    border-right: 1px solid #d0d0d0;
    white-space: nowrap;
    overflow: hidden;
}
.tab-ds {
    justify-content: flex-start;
    padding-left: 10px;
    gap: 0;
}
.tab-ds .db {
    margin-right: 5px;
}
.tab-on {
    background: #fafafa;
    font-weight: 700;
}
.tab-cut {
    justify-content: flex-start;
    padding-left: 8px;
}
.tab-ic:last-child {
    border-right: none;
}
.status {
    height: 26px;
    display: grid;
    grid-template-columns: 1502px 157px 32px 32px 56px 71px 70px;
    background: #ebebeb;
    font-size: 13px;
    color: #444;
}
.st-cell {
    border-right: 1px solid #d8d8d8;
    display: flex;
    align-items: center;
}
.st-cell:last-child {
    border-right: none;
}
.st-info {
    padding-left: 3px;
    gap: 21px;
}
.st-nav {
    justify-content: center;
    gap: 8px;
}
.st-view {
    justify-content: center;
    gap: 9px;
}

.watermark {
    position: absolute;
    left: 1554px;
    top: 925px;
    font-family: "Open Sans", sans-serif;
    color: rgba(130, 130, 130, .5);
    pointer-events: none;
    white-space: nowrap;
}
.wm-big {
    font-size: 24px;
    line-height: 30px;
}
.wm-small {
    font-size: 17.300px;
    line-height: 30px;
}

/* taskbar */
.taskbar {
    height: 50px;
    background: #20211e;
    display: flex;
    align-items: stretch;
    color: #fff;
}
.start {
    width: 60px;
    display: flex;
    align-items: center;
    justify-content: center;
    flex: none;
}
.task-search {
    width: 430px;
    flex: none;
    background: #f0f0f0;
    border: 1px solid #bbb;
    display: flex;
    align-items: center;
    padding-left: 15px;
    gap: 12px;
    font-family: "Open Sans", sans-serif;
    font-size: 18px;
    color: #222;
}
.task-icons {
    margin-left: 1px;
    display: grid;
    grid-template-columns: repeat(12, 61.900px);
}
.task-ic {
    position: relative;
    display: flex;
    align-items: center;
    justify-content: center;
}
.task-view {
    padding-right: 5px;
}
.task-open::after, .task-active::after {
    content: "";
    position: absolute;
    bottom: 0;
    height: 3px;
    background: #76b9ed;
}
.task-open::after {
    left: 4px;
    right: 7px;
}
.task-active {
    background: #4e4e4e;
}
.task-active::after {
    left: 0;
    right: 0;
}
.wa-badge {
    position: absolute;
    right: 7px;
    bottom: 4px;
    width: 19px;
    height: 19px;
    border-radius: 50%;
    background: #333;
    border: 1px solid #aaa;
    font-size: 13px;
    line-height: 17px;
    text-align: center;
    color: #fff;
}
.fontbook {
    width: 24px;
    height: 33px;
    background: linear-gradient(#8fb9e0 0 18%, #dce8f2 18%);
    border: 1px solid #6b96bd;
    border-radius: 2px;
    position: relative;
    padding: 5px 0 0 3px;
}
.fontbook span {
    font-size: 15px;
    font-weight: 700;
    color: #e8862b;
    line-height: 16px;
    display: block;
}
.fontbook i {
    position: absolute;
    right: 3px;
    top: 8px;
    width: 8px;
    height: 7px;
    border-top: 2px solid #6b96bd;
    border-bottom: 2px solid #6b96bd;
}
.tray {
    margin-left: auto;
    display: flex;
    align-items: center;
    padding-right: 32px;
    gap: 10px;
    font-family: "Open Sans", sans-serif;
}
.tray-wifi {
    margin: 0 1px 0 5px;
}
.lang {
    font-size: 14.500px;
    margin-left: 2px;
}
.clock {
    width: 76px;
    margin-left: 6px;
    display: flex;
    flex-direction: column;
    align-items: center;
    font-size: 14.500px;
    line-height: 23px;
    white-space: nowrap;
}
.notif {
    margin-left: 14px;
}
```
